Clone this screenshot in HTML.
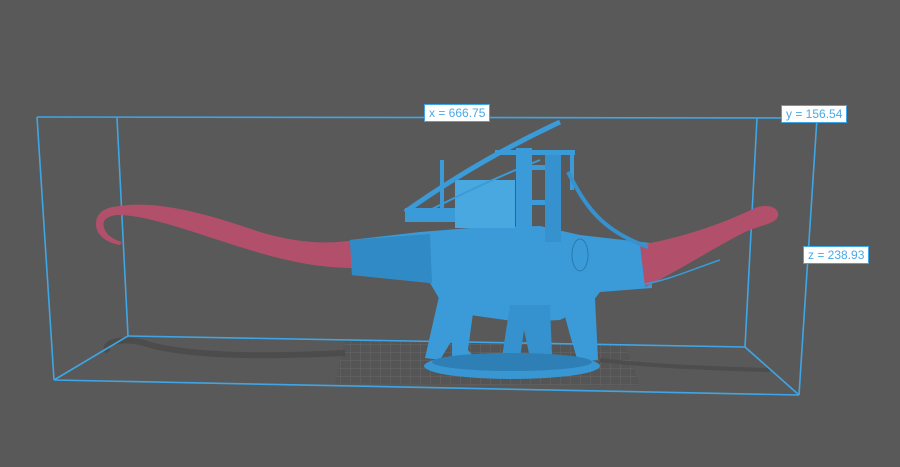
<!DOCTYPE html>
<html><head><style>
html,body{margin:0;padding:0;background:#595959;width:900px;height:467px;overflow:hidden}
.lbl{position:absolute;background:#fff;border:1px solid #3ea6e6;color:#4aa8e6;font:12px "Liberation Sans",sans-serif;padding:0 4px;line-height:16px;white-space:nowrap}
</style></head><body>
<svg width="900" height="467" style="position:absolute;left:0;top:0">
<defs>
<pattern id="g" width="10" height="8" patternUnits="userSpaceOnUse"><path d="M0 0H10M0 0V8" stroke="#6a6a6a" stroke-width="1" fill="none"/></pattern>
</defs>
<polygon points="345,340 625,344 640,386 335,383" fill="#555" />
<polygon points="345,340 625,344 640,386 335,383" fill="url(#g)" opacity="0.8"/>
<path d="M108,352 C100,340 130,337 150,345 C200,358 280,356 345,353" stroke="#474747" stroke-width="6" fill="none" opacity="0.7"/>
<path d="M600,360 C640,365 690,368 770,370" stroke="#4d4d4d" stroke-width="4" fill="none"/>
<g stroke="#3ea6e6" stroke-width="1.6" fill="none">
<line x1="117" y1="118" x2="128" y2="336"/>
<line x1="757" y1="118" x2="745" y2="347"/>
<line x1="128" y1="336" x2="745" y2="347"/>
<line x1="54" y1="380" x2="128" y2="336"/>
<line x1="745" y1="347" x2="799" y2="395"/>
</g>
<path d="M120,206 C160,200 210,215 260,232 C300,244 330,244 355,240 L355,268 C320,268 290,262 250,250 C200,235 150,215 118,215 C105,216 100,222 106,232 C110,238 118,241 122,242 L120,245 C108,243 96,236 96,224 C96,212 106,207 120,206 Z" fill="#b2506c"/>
<path d="M350,240 L420,232 L470,228 L540,226 L580,235 L650,243 L652,288 L600,292 L590,305 L560,320 L520,322 L470,315 L440,300 L430,283 L352,275 Z" fill="#3a9bd8"/>
<path d="M350,240 L430,234 L432,283 L352,275 Z" fill="#2f8ac6"/>
<path d="M440,292 L475,298 L468,350 L475,358 L452,360 L452,340 L440,360 L425,358 Z" fill="#3a9bd8"/>
<path d="M510,305 L550,305 L552,355 L530,358 L524,330 L520,358 L502,357 Z" fill="#3592cf"/>
<path d="M560,298 L595,298 L598,360 L578,362 L570,335 Z" fill="#3a9bd8"/>
<ellipse cx="512" cy="366" rx="88" ry="13" fill="#3896d3"/>
<ellipse cx="512" cy="362" rx="80" ry="9" fill="#2e7fb5"/>
<path d="M640,245 C680,238 720,225 755,208 C768,203 780,208 778,216 C776,224 760,225 745,232 C710,250 680,270 645,287 Z" fill="#b2506c"/>
<path d="M640,285 C670,280 690,270 720,260" stroke="#3a9bd8" stroke-width="1.5" fill="none"/>
<ellipse cx="580" cy="255" rx="8" ry="16" fill="#3a9bd8" stroke="#2a7ab0"/>
<rect x="405" y="208" width="55" height="14" fill="#3a9bd8"/>
<rect x="455" y="180" width="60" height="48" fill="#4aa8e0"/>
<rect x="516" y="148" width="16" height="100" fill="#3a9bd8"/>
<rect x="545" y="152" width="16" height="90" fill="#3592cf"/>
<rect x="532" y="165" width="13" height="5" fill="#3a9bd8"/>
<rect x="532" y="200" width="13" height="5" fill="#3a9bd8"/>
<path d="M405,212 C450,180 500,150 560,122" stroke="#3a9bd8" stroke-width="5" fill="none"/>
<path d="M420,215 C460,195 490,180 540,160" stroke="#3a9bd8" stroke-width="2" fill="none"/>
<rect x="440" y="160" width="4" height="50" fill="#3a9bd8"/>
<rect x="495" y="150" width="80" height="5" fill="#3a9bd8"/>
<rect x="570" y="150" width="4" height="40" fill="#3a9bd8"/>
<path d="M568,172 C585,205 600,230 648,247" stroke="#3592cf" stroke-width="4" fill="none"/>
<path d="M610,250 C605,270 620,290 640,288" stroke="#3a9bd8" stroke-width="1.5" fill="none"/>
<g stroke="#3ea6e6" stroke-width="1.6" fill="none">
<line x1="37" y1="117" x2="817" y2="118"/>
<line x1="37" y1="117" x2="54" y2="380"/>
<line x1="817" y1="118" x2="799" y2="395"/>
<line x1="54" y1="380" x2="799" y2="395"/>
</g>
</svg>
<div class="lbl" style="left:424px;top:104px">x = 666.75</div>
<div class="lbl" style="left:781px;top:105px">y = 156.54</div>
<div class="lbl" style="left:803px;top:246px">z = 238.93</div>
</body></html>
